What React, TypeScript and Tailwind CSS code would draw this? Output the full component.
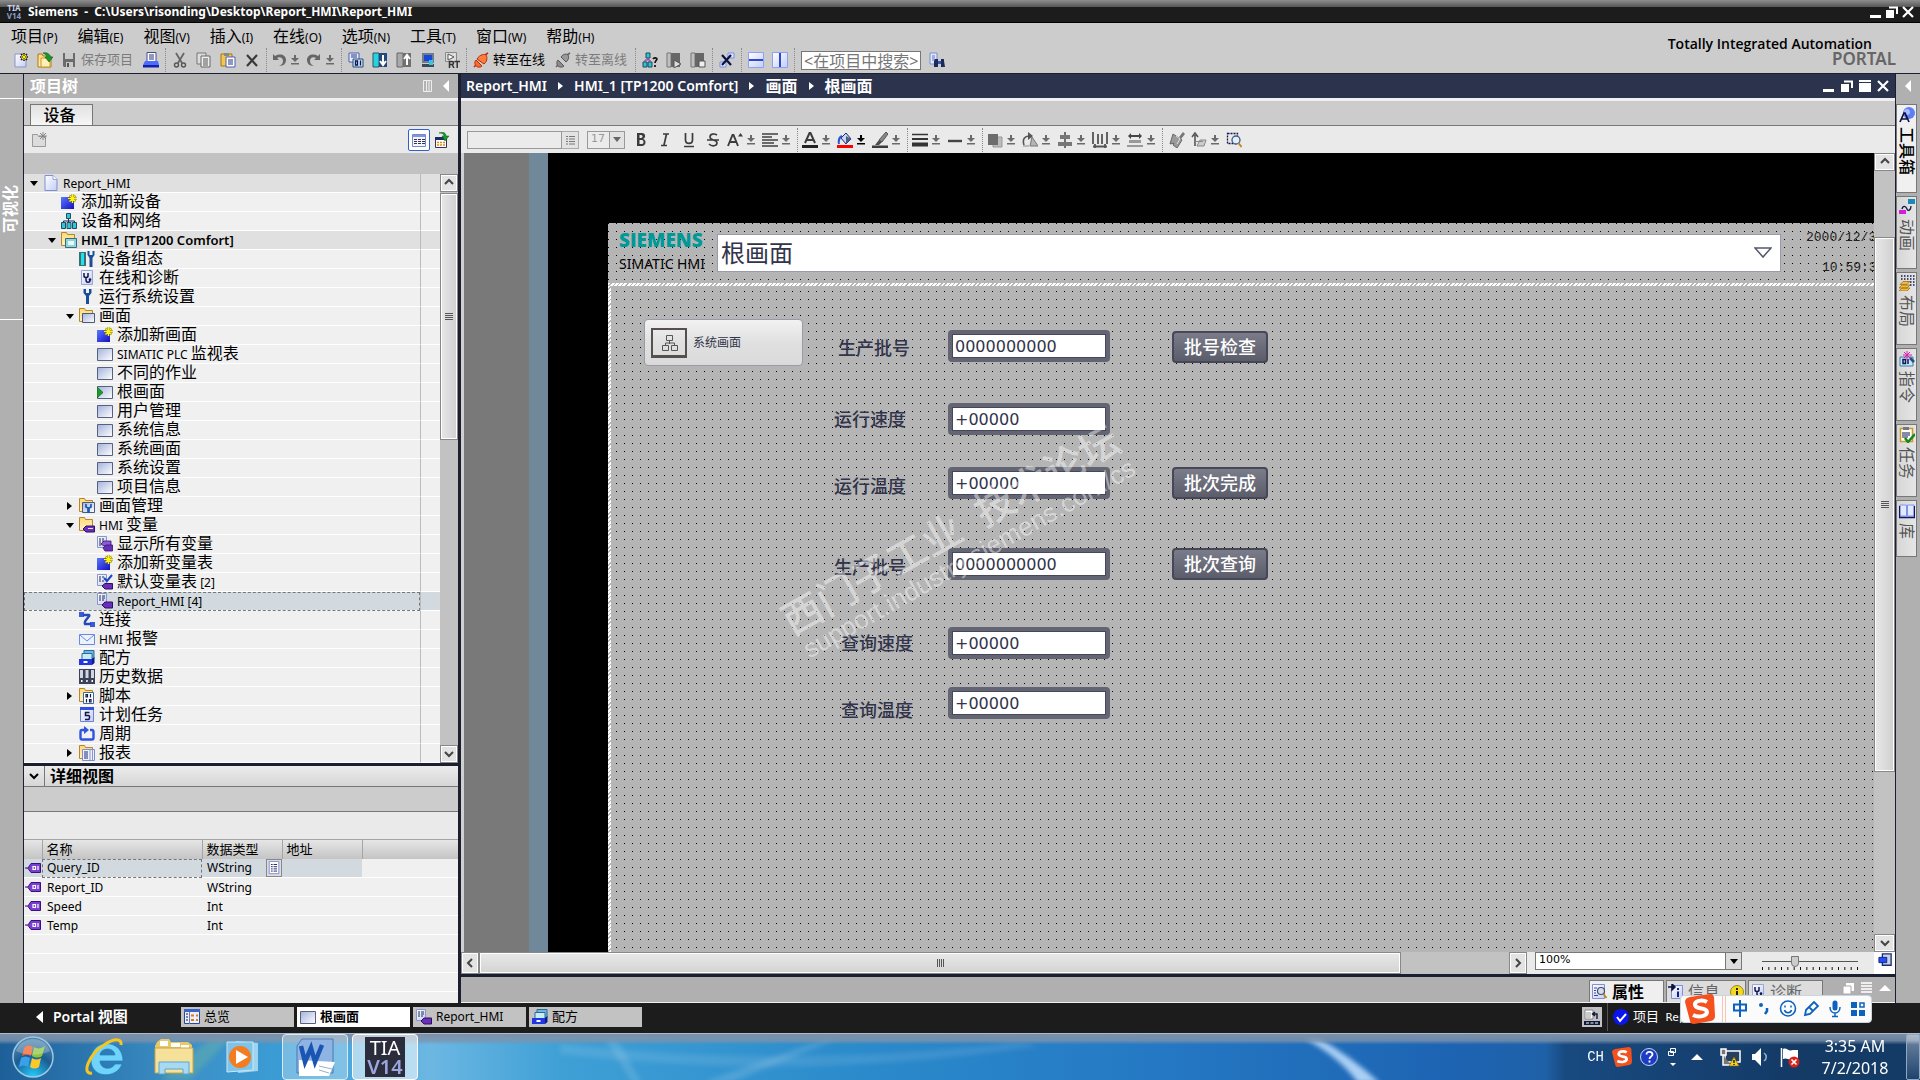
import { Fragment } from 'react'
import type { ReactNode } from 'react'
import clsx from 'clsx'

const icons: Record<string, ReactNode> = {
  newProject: (
    <>
      <path d="M2 2h8l3 3v10H2z" fill="url(#page)" stroke="#8794cf" />
      <path d="M11 1v8M7 5h8M8 2l6 6M14 2L8 8" stroke="#1c1c1c" strokeWidth="1.6" />
      <path d="M11 2v6M8 5h6M9 3l4 4M13 3L9 7" stroke="#ffee00" />
    </>
  ),
  open: (
    <>
      <path d="M1 2h4l1 2h8v11H1z" fill="url(#folder)" stroke="#b07a10" />
      <path d="M4 6h9v9H4z" fill="#fff0b8" stroke="#c99525" />
      <path d="M6 1c4-1 7 1 7 4h3l-4 5-4-5h2c0-2-2-3-4-4z" fill="#16982a" stroke="#0b5c16" strokeWidth=".6" />
    </>
  ),
  save: (
    <>
      <path d="M2 1h12v14H3l-1-1z" fill="#6b6b6b" />
      <path d="M4 1h8v6H4z" fill="#c9c9c9" />
      <path d="M5 10h7v5H5z" fill="#c9c9c9" />
      <path d="M6 11h2v4H6z" fill="#555" />
    </>
  ),
  print: (
    <>
      <path d="M4 .5h9v9H4z" fill="#fff" stroke="#444b88" />
      <path d="M6 3h5M6 5h5M6 7h5" stroke="#23307a" />
      <path d="M2 9h13l1 4H0z" fill="#4d6cff" />
      <path d="M0 13h16v2.500H0z" fill="#1220a8" />
    </>
  ),
  cut: (
    <>
      <path d="M4 1l6 10M12 1L6 11" stroke="#666" strokeWidth="1.8" fill="none" />
      <circle cx="4.5" cy="13" r="2" fill="none" stroke="#555" strokeWidth="1.4" />
      <circle cx="11.5" cy="13" r="2" fill="none" stroke="#555" strokeWidth="1.4" />
    </>
  ),
  copy: (
    <>
      <path d="M1 1h9v11H1z" fill="#ddd" stroke="#777" />
      <path d="M5 4h9v11H5z" fill="#eee" stroke="#666" />
      <path d="M7 7h5M7 9h5M7 11h5M7 13h5" stroke="#555" />
    </>
  ),
  paste: (
    <>
      <path d="M1 2h11v12H1z" fill="#f3c64d" stroke="#a3761a" />
      <path d="M4 1h5v3H4z" fill="#888" />
      <path d="M6 5h9v10H6z" fill="#fff" stroke="#4d5fb8" />
      <path d="M8 8h5M8 10h5M8 12h5" stroke="#23307a" />
    </>
  ),
  cross: <path d="M3 3l10 11M13 3L3 14" stroke="#3a3a3a" strokeWidth="2.2" />,
  undo: <path d="M2 2v6h6L6 6c3-2 6 0 6 3s-2 4-4 5c5 0 7-3 7-6 0-5-6-7-11-4z" fill="#666" />,
  redo: <path d="M14 2v6H8l2-2C7 4 4 6 4 9s2 4 4 5c-5 0-7-3-7-6 0-5 6-7 11-4z" fill="#666" />,
  compile: (
    <>
      <path d="M1 1h10v9H1z" fill="#e8edff" stroke="#4a5fae" />
      <path d="M3 3h6M3 5h6" stroke="#28377a" />
      <path d="M5 7h10v8H5z" fill="#cfe2f7" stroke="#1d4d80" />
      <path d="M7.500 9h2v4h-2zM12.500 8.500v5" fill="none" stroke="#10164e" strokeWidth="1.3" />
    </>
  ),
  download: (
    <>
      <path d="M1 1h6v14H1z" fill="#25d4e4" stroke="#33555a" />
      <path d="M7 1h8v14H7z" fill="#26467e" />
      <path d="M11 3v9M8 9l3 4 3-4" stroke="#fff" strokeWidth="2" fill="none" />
    </>
  ),
  upload: (
    <>
      <path d="M1 1h6v14H1z" fill="#aaa" stroke="#666" />
      <path d="M7 1h8v14H7z" fill="#707070" />
      <path d="M11 4v9M8 7l3-4 3 4" stroke="#fff" strokeWidth="2" fill="none" />
    </>
  ),
  simulate: (
    <>
      <path d="M2 1h12v10H2z" fill="#6f7d88" />
      <path d="M4 3h8v6H4z" fill="#1647d8" />
      <path d="M2 12h12v3H2z" fill="#3d4a55" />
      <path d="M9 8h4v5H9z" fill="#31c7e8" />
    </>
  ),
  runtime: (
    <>
      <path d="M1.500.5h11v9h-11z" fill="#ddd" stroke="#888" />
      <path d="M4 2l6 3-6 3z" fill="#fff" stroke="#555" />
      <path d="M5.500 16V9.500h2.500c2 0 2 3 0 3H6M8 12.500l2 3.500M10.500 9.500H16M13.200 9.500V16" stroke="#333" strokeWidth="1.500" />
    </>
  ),
  online: (
    <>
      <path d="M1 15l3-3M15 1l-3 2" stroke="#c03010" strokeWidth="1.6" />
      <path d="M3 8l6 6c-2 2-5 1-6 0s-2-4 0-6z" fill="#ff6a2a" stroke="#b32c08" />
      <path d="M4 7c3-5 8-5 9-4s2 6-2 9z" fill="#ff7d3c" stroke="#b32c08" />
    </>
  ),
  offline: (
    <>
      <path d="M1 15l3-3M15 1l-3 2" stroke="#666" strokeWidth="1.6" />
      <path d="M3 8l6 6c-2 2-5 1-6 0s-2-4 0-6z" fill="#8d8d8d" stroke="#555" />
      <path d="M6 5c3-4 6-3 7-2s1 5-2 7z" fill="#999" stroke="#555" />
    </>
  ),
  accessible: (
    <>
      <path d="M4 1h4v5H4zM1 10h4v5H1zM6 10h4v5H6z" fill="#29c5d5" stroke="#204a5a" />
      <path d="M6 6v2M3 10V8h5v2" stroke="#8a2fa8" fill="none" />
      <path d="M11 7c1-2 4-1 4 0s-2 2-2 4M13 13v2" stroke="#111" strokeWidth="1.7" fill="none" />
    </>
  ),
  startCpu: (
    <>
      <path d="M1 1h4v14H1z" fill="#c0c0c0" stroke="#777" />
      <path d="M5 1h9v14H5z" fill="#666" />
      <path d="M8 8l7 4-7 4z" fill="#ddd" stroke="#555" />
    </>
  ),
  stopCpu: (
    <>
      <path d="M1 1h4v14H1z" fill="#c0c0c0" stroke="#777" />
      <path d="M5 1h9v14H5z" fill="#666" />
      <path d="M9 9h6v6H9z" fill="#eee" stroke="#555" />
    </>
  ),
  crossRef: (
    <>
      <path d="M9 1h6v5H9zM1 10h6v5H1z" fill="#dfe6ff" stroke="#7c8ee8" />
      <path d="M3 3l9 10M12 3L3 13" stroke="#0a1440" strokeWidth="2.200" />
    </>
  ),
  splitH: (
    <>
      <path d="M.5.5h15v15H.5z" fill="url(#page)" stroke="#8ea0f0" />
      <path d="M1 8h14" stroke="#2c48cf" strokeWidth="2" />
    </>
  ),
  splitV: (
    <>
      <path d="M.5.5h15v15H.5z" fill="url(#page)" stroke="#8ea0f0" />
      <path d="M8 1v14" stroke="#2c48cf" strokeWidth="2" />
    </>
  ),
  findInProject: (
    <>
      <path d="M1 1h7v11H1z" fill="#dfe6ff" stroke="#7c8ec8" />
      <path d="M3 4h3M3 6h3M3 8h3" stroke="#6676b8" />
      <path d="M6 7h3v8H5V9zM12 7h3v2l1 6h-4z" fill="#1a2a5a" />
      <path d="M9 9h3v3H9z" fill="#3a56a8" />
    </>
  ),
  page: (
    <>
      <path d="M2 .5h8l4 4v11H2z" fill="url(#page)" stroke="#7e8fd0" />
      <path d="M10 .5v4h4" fill="#fff" stroke="#9aa8e0" />
    </>
  ),
  addNew: (
    <>
      <path d="M0 3h13v12H0z" fill="url(#blue)" />
      <path d="M11.500 0v9M7 4.500h9M8.500 1.500l6 6M14.500 1.500l-6 6" stroke="#77771a" strokeWidth="2" />
      <path d="M11.500 0v9M7 4.500h9M8.500 1.500l6 6M14.500 1.500l-6 6" stroke="#fff21a" strokeWidth="1.200" />
    </>
  ),
  network: (
    <>
      <path d="M7.500 5v4M2.500 10V8h11v2" stroke="#1a2a5a" fill="none" />
      <path d="M5.500.5h4v5h-4zM.5 9.500h4v6h-4zM6 9.500h4v6H6zM11.500 9.500h4v6h-4z" fill="#2cc9d4" stroke="#244a6a" />
    </>
  ),
  folderHmi: (
    <>
      <path d="M.5.5h5l1 2h7v11H.5z" fill="url(#folder)" stroke="#b5862a" />
      <path d="M4.500 6.500h11v9h-11z" fill="#8fd5dc" stroke="#3a6a78" />
      <path d="M7 9h6v4H7z" fill="#e6fbff" />
    </>
  ),
  folderScreens: (
    <>
      <path d="M.5.5h5l1 2h7v11H.5z" fill="url(#folder)" stroke="#b5862a" />
      <path d="M3.500 5.500h12v9h-12z" fill="url(#screen)" stroke="#4c5a78" />
    </>
  ),
  folderManage: (
    <>
      <path d="M.5.5h5l1 2h7v11H.5z" fill="url(#folder)" stroke="#b5862a" />
      <path d="M3.500 4.500h12v10h-12z" fill="url(#screen)" stroke="#4c5a78" />
      <path d="M7 6v3l2 1v4h1v-4l2-1V6" stroke="#1a57b0" strokeWidth="1.700" fill="none" />
    </>
  ),
  folderTags: (
    <>
      <path d="M.5.5h5l1 2h7v11H.5z" fill="url(#folder)" stroke="#b5862a" />
      <path d="M4 12l3-3h8.500v6H7z" fill="#6a2fb8" stroke="#2d0f66" />
      <path d="M9 11.500h5" stroke="#e6d8ff" />
    </>
  ),
  folderScript: (
    <>
      <path d="M.5.5h5l1 2h7v11H.5z" fill="url(#folder)" stroke="#b5862a" />
      <path d="M4.500 4.500h10v11h-10z" fill="#fff" stroke="#3a6a98" />
      <path d="M7 6.500h1.500v2.500H7zM11.500 6v3.500M7.500 11v3.500M10.500 11.500H12V14h-1.500z" fill="none" stroke="#111a50" strokeWidth="1.200" />
    </>
  ),
  folderReport: (
    <>
      <path d="M.5.5h5l1 2h7v11H.5z" fill="url(#folder)" stroke="#b5862a" />
      <path d="M3.500 4.500h12v11h-12z" fill="#eef1ff" stroke="#7e8fd0" />
      <path d="M5 7h4M5 9h4M5 11h4M5 13h4" stroke="#1a2a7a" />
      <path d="M11 5v10M13.500 5v10" stroke="#8a96c8" />
    </>
  ),
  deviceConfig: (
    <>
      <path d="M0 1h7v14H0z" fill="#3c6f72" />
      <path d="M2 2h3v12H2z" fill="#1de3ee" />
      <path d="M8.500 0v4l2 3v9h3V7l2-3V0h-2v4h-3V0z" fill="#1a4e9a" />
    </>
  ),
  diagnose: (
    <>
      <path d="M2.500.5h11v14h-11z" fill="url(#page)" stroke="#9aa6d8" />
      <path d="M5 3v3c0 2 4 2 4 0V3M7 8v2c0 3 4 3 4 0" stroke="#10164e" strokeWidth="1.500" fill="none" />
      <circle cx="11" cy="9.500" r="1.300" fill="#10164e" />
    </>
  ),
  wrench: <path d="M4.500 0v4L7 7v8h3V7l2.500-3V0H10v4H7V0z" fill="#1a4e9a" />,
  screen: <path d="M.5 2.500h15v12H.5z" fill="url(#screen)" stroke="#55617e" />,
  startScreen: (
    <>
      <path d="M.5 2.500h15v12H.5z" fill="url(#screen)" stroke="#55617e" />
      <path d="M0 3l6 5.500L0 14z" fill="#1e9a2c" stroke="#0b5c16" strokeWidth=".7" />
    </>
  ),
  tagsAll: (
    <>
      <path d="M.5.5h9v11h-9z" fill="url(#page)" stroke="#8a96c8" />
      <path d="M2 3h2M5 3h2M2 5h2M5 5h2M2 7h2M2 9h2" stroke="#1a2a5a" />
      <path d="M4 8l3-3h7v5H7z" fill="#8f5ad8" stroke="#34106e" strokeWidth=".8" />
      <path d="M6 12l3-3h6.500v6H8z" fill="#6a2fb8" stroke="#34106e" strokeWidth=".8" />
    </>
  ),
  tagTable: (
    <>
      <path d="M.5.5h9v11h-9z" fill="url(#page)" stroke="#8a96c8" />
      <path d="M2 3h2M5 3h3M2 5h2M5 5h3M2 7h2M5 7h2" stroke="#1a2a5a" />
      <path d="M5 12l3-3h7.500v6H8z" fill="#6a2fb8" stroke="#2d0f66" />
    </>
  ),
  tagDefault: (
    <>
      <path d="M.5.5h9v11h-9z" fill="url(#page)" stroke="#8a96c8" />
      <path d="M2 3h2M5 3h2M2 5h2M2 7h2M5 7h2" stroke="#1a2a5a" />
      <path d="M7 4l3 3 5-6" stroke="#1a44c4" strokeWidth="2" fill="none" />
      <path d="M5 12l3-2.500h7.500v5.500H8z" fill="#6a2fb8" stroke="#2d0f66" />
    </>
  ),
  connection: (
    <>
      <path d="M0 0h5v5H0zM11 10h5v5h-5z" fill="#3a5ad8" />
      <path d="M4 3h6c2 1-6 6-4 9h6" stroke="#2748b8" strokeWidth="2.400" fill="none" />
    </>
  ),
  mail: (
    <>
      <path d="M.5 3.500h15v10H.5z" fill="#eaf2ff" stroke="#6f88dc" />
      <path d="M1 4l7 6 7-6" fill="none" stroke="#6f88dc" />
    </>
  ),
  recipe: (
    <>
      <path d="M5 .5h10v8H5z" fill="#6fb8dc" stroke="#2a6a98" />
      <path d="M3 3.500h10v7H3z" fill="#c8ecf6" stroke="#2a6a98" />
      <path d="M13 9l2.500-2v6L13 15z" fill="#0f1a8a" />
      <path d="M0 9h13v6H0z" fill="#1f36e0" />
      <path d="M4.500 11h4v2h-4z" fill="#fff" />
    </>
  ),
  history: (
    <>
      <path d="M0 0h16v15H0z" fill="#3b4258" />
      <path d="M1 1h3v8H1zM6.500 1h3v8h-3zM12 1h3v8h-3z" fill="#cfd5e2" />
      <path d="M2 11h1.500v2H2zM7.200 11h1.500v2H7.200zM12.500 11H14v2h-1.500z" fill="#fff" />
    </>
  ),
  calendar: (
    <>
      <path d="M1.500.5h13v14h-13z" fill="url(#page)" stroke="#6f7fd8" />
      <path d="M1 0h14v3H1z" fill="#2f52e0" />
      <path d="M10.500 5.500h-4v3h3c1.500 0 1.500 4-.5 4H6" stroke="#10164e" strokeWidth="1.500" fill="none" />
    </>
  ),
  cycle: (
    <>
      <path d="M5 4H3q-1.500 0-1.500 2v5.500q0 2 1.500 2h10q1.500 0 1.500-2V6q0-2-1.500-2h-2" stroke="#2f52e0" strokeWidth="2.400" fill="none" />
      <path d="M5 0l5 4-5 4z" fill="#2f52e0" />
    </>
  ),
  tag: (
    <>
      <path d="M0 8h3l3-4.500h9.500v9H6L3 8.500" fill="#7a3fd0" stroke="#3a1080" />
      <path d="M8 6.500h2.500v3H8zM13 6v4" stroke="#fff" fill="none" strokeWidth="1.200" />
    </>
  ),
  list: (
    <>
      <path d="M2.500.5h11v14h-11z" fill="#fff" stroke="#6f82d8" />
      <path d="M4.500 4h2M7.500 4h4M4.500 6.500h2M7.500 6.500h4M4.500 9h2M7.500 9h4M4.500 11.500h2M7.500 11.500h4" stroke="#10164e" />
    </>
  ),
  detailsView: (
    <>
      <path d="M1.500 2.500h13v12h-13z" fill="#f4f6ff" stroke="#7787c8" />
      <path d="M2 4h12" stroke="#7f94e8" strokeWidth="2" />
      <path d="M3 7.500h3M7 7.500h3M11 7.500h3M3 9.500h3M7 9.500h3M11 9.500h3M3 11.500h3M7 11.500h3M11 11.500h3" stroke="#334" />
    </>
  ),
  goTo: (
    <>
      <path d="M1.500 5.500h11v10h-11z" fill="#fff" stroke="#335" />
      <path d="M1 5h11v3H1z" fill="#1b2c6a" />
      <path d="M3 10.500h2M6 10.500h2M9 10.500h2M3 13h2M6 13h2M9 13h2" stroke="#e08a10" strokeWidth="1.600" />
      <path d="M5 1c4-2 7 0 7 3h3l-4 5-3-5h2c0-2-2-3-5-3z" fill="#16982a" stroke="#0b5c16" strokeWidth=".5" />
    </>
  ),
  newFolderOff: (
    <>
      <path d="M1.500 2.500h5l1 2h7v10h-13z" fill="#dcdcdc" stroke="#999" />
      <path d="M12 0v8M8 4h8M9 1l6 6M15 1L9 7" stroke="#888" />
    </>
  ),
  bold: <path d="M4 1h5c4 0 4 5 1 6 4 1 3 7-1 7H4zm2.500 2v3H8c2 0 2-3 0-3zm0 5v4H9c2 0 2-4 0-4z" fill="#3c3c3c" fillRule="evenodd" />,
  italic: <path d="M6 2h6M4 13.500h6M9.500 2l-2.500 11" stroke="#3c3c3c" strokeWidth="1.700" />,
  underline: <path d="M4.500 1v7c0 4.500 7 4.500 7 0V1M3 14.500h10" fill="none" stroke="#3c3c3c" strokeWidth="1.700" />,
  strike: <path d="M12 3c-3-2-7-1-7 2 0 4 7 2 7 6 0 3-5 4-8 1M2 8h12" fill="none" stroke="#3c3c3c" strokeWidth="1.600" />,
  fontSize: (
    <>
      <path d="M1 14L5.500 3h1L11 14M3 10h6" fill="none" stroke="#3c3c3c" strokeWidth="1.900" />
      <path d="M11 4.500L13.500 1 16 4.500z" fill="#3c3c3c" />
    </>
  ),
  align: <path d="M0 2h16M0 5h10M0 8h16M0 11h12M0 14h16" stroke="#6a6a6a" strokeWidth="1.800" />,
  fontColor: (
    <>
      <path d="M3 11L7.500 1h1L13 11M5 8h6" fill="none" stroke="#3c3c3c" strokeWidth="2" />
      <path d="M0 13h16v3H0z" fill="#222" />
    </>
  ),
  fillColor: (
    <>
      <path d="M4 6l5-5 5 6-5 5z" fill="#c8d6f4" stroke="#1c2c5a" />
      <path d="M9 4l5 3-5 5z" fill="#4a5f90" />
      <path d="M5 4c-2 1-4 3-3 8" stroke="#2b55d8" strokeWidth="2" fill="none" />
      <path d="M0 13h16v3H0z" fill="#f00" />
    </>
  ),
  lineColor: (
    <>
      <path d="M14 0l2 2-6 8-3-2z" fill="#888" stroke="#555" />
      <path d="M7 8l3 2-3 3H3z" fill="#4c4c4c" />
      <path d="M0 13.500h16V16H0z" fill="#3c3c3c" />
    </>
  ),
  lineWidth: (
    <>
      <path d="M0 2.500h16" stroke="#333" strokeWidth="1.500" />
      <path d="M0 7h16" stroke="#333" strokeWidth="2" />
      <path d="M0 12.500h16" stroke="#333" strokeWidth="4" />
    </>
  ),
  lineStyle: <path d="M1 9h14" stroke="#444" strokeWidth="2.400" />,
  order: (
    <>
      <path d="M6 5h9v10H6z" fill="#bbb" stroke="#999" />
      <path d="M1 2h10v11H1z" fill="#6c6c6c" />
    </>
  ),
  rotate: (
    <>
      <path d="M8 14l2-9 6 9z" fill="#b5b5b5" stroke="#777" />
      <path d="M2 13C0 7 3 4 7 4" fill="none" stroke="#555" strokeWidth="1.600" />
      <path d="M6 0l5 4-5 4z" fill="#555" />
      <path d="M1 14h6" stroke="#888" />
    </>
  ),
  alignObj: (
    <>
      <path d="M8 0v16" stroke="#444" strokeWidth="1.500" />
      <path d="M3 3h10v4H3zM1 10h14v4H1z" fill="#777" />
    </>
  ),
  distribute: <path d="M1 0v12M6 2v10M10 2v10M15 0v12M1 14.500h14M3 12v4M13 12v4" stroke="#555" strokeWidth="1.800" />,
  sameSize: (
    <>
      <path d="M1 4l3-3v2h8V1l3 3-3 3V5H4v2z" fill="#444" />
      <path d="M2 8h12v3H2zM0 13h16v2H0z" fill="#999" />
    </>
  ),
  formatBrush: (
    <>
      <path d="M10 5l4-5 2 2-4 5z" fill="#777" />
      <path d="M4 2l9 6-5 8-4-3 1-2-4 1z" fill="#9b9b9b" stroke="#666" />
      <path d="M7 4l4 3-3 5" stroke="#ddd" />
    </>
  ),
  tabOrder: (
    <>
      <path d="M4 14V3M1 5l3-4 3 4" stroke="#555" strokeWidth="1.600" fill="none" />
      <path d="M4 9.500h8M9 8h6l-2 6H6z" fill="#ccc" stroke="#888" />
    </>
  ),
  zoomSel: (
    <>
      <path d="M1.500 1.500h10v10h-10z" fill="none" stroke="#10164e" strokeWidth="1.300" strokeDasharray="2 1" />
      <circle cx="10" cy="8" r="4" fill="#dcf0ff" stroke="#4a5a78" strokeWidth="1.300" />
      <path d="M12.500 11l3 4" stroke="#c08a20" strokeWidth="2" />
    </>
  ),
  toolbox: (
    <>
      <circle cx="10" cy="6" r="6" fill="#5f7df4" />
      <circle cx="8" cy="5" r="3" fill="#a9bcff" />
      <path d="M1 15l4-9h1l4 9M3 12h5" stroke="#0a0f40" strokeWidth="1.700" fill="none" />
    </>
  ),
  animation: (
    <>
      <path d="M9 0h7v5H9z" fill="#1b88b8" />
      <path d="M0 11h7v4H0z" fill="#d01fd8" />
      <path d="M3 10c1-4 4-3 5 0s4 1 4-3" fill="none" stroke="#10164e" strokeWidth="1.300" />
    </>
  ),
  layout: (
    <>
      <path d="M2 1h14M2 4h14M8 7h8M11 10h5" stroke="#10164e" strokeWidth="1.300" strokeDasharray="1.500 1.500" />
      <path d="M0 13l3-3h8l-3 3zM1 9.500l3-3h7l-3 3zM0 16l3-3h8l-3 3z" fill="#f0b93a" stroke="#9a6a10" strokeWidth=".7" />
    </>
  ),
  instructions: (
    <>
      <path d="M1 6h13v9H1z" fill="#c7e6f8" stroke="#3a7fb0" />
      <path d="M4 8.500h2.500v4H4zM9 8v5" fill="none" stroke="#10164e" strokeWidth="1.500" />
      <path d="M8 0v9M4 4h9M5 1l6 6M11 1L5 7" stroke="#d81fb0" />
      <path d="M11 7l4 4" stroke="#2a4a80" strokeWidth="2.500" />
    </>
  ),
  tasks: (
    <>
      <path d="M1.500 1.500h12v13h-12z" fill="#fff" stroke="#c99a2a" strokeWidth="1.500" />
      <path d="M4 0h6v3H4z" fill="#777" />
      <path d="M3 6h8M3 8h8M3 10h6" stroke="#10164e" />
      <path d="M6 11l3 4 7-8" stroke="#16881f" strokeWidth="2.500" fill="none" />
    </>
  ),
  library: (
    <>
      <path d="M1 2h6.500v11H1zM8.500 2H15v11H8.500z" fill="#e3e9ff" stroke="#7f95f0" />
      <path d="M.5 3v11.500h15V3" fill="none" stroke="#0c1766" strokeWidth="1.300" />
    </>
  ),
  overview: (
    <>
      <path d="M.5.5h15v14H.5z" fill="#e9efff" stroke="#2a4a90" />
      <path d="M0 0h16v3H0z" fill="#3a62c8" />
      <path d="M2 5h2M2 8h2M2 11h2" stroke="#10164e" />
      <path d="M7 6.500h3M12 6.500h2M7 11h3M12 11h2" stroke="#e07a10" strokeWidth="2" />
      <path d="M5.500 3v12" stroke="#6a7ab8" />
    </>
  ),
  properties: (
    <>
      <path d="M.5.5h12v14H.5z" fill="url(#page)" stroke="#7f8fd8" />
      <path d="M2 4h3M2 6.500h2M2 9h2M2 11.500h4" stroke="#334a9a" />
      <circle cx="9" cy="7" r="3.500" fill="#d8dce8" stroke="#444c68" strokeWidth="1.200" />
      <path d="M11.500 10l3 4" stroke="#c08a20" strokeWidth="2" />
    </>
  ),
  info: (
    <>
      <path d="M3.500 1.500h11v13h-11z" fill="url(#page)" stroke="#7f8fd8" />
      <path d="M0 3h5M4 0l3 3-3 3z" stroke="#0c1444" strokeWidth="1.500" fill="#0c1444" />
      <path d="M10 4v2M10 7.500V13" stroke="#10208a" strokeWidth="2" />
    </>
  ),
  popOut: (
    <>
      <path d="M5 1h10v13H5z" fill="#c6d0e6" stroke="#1a2c70" strokeWidth="1.500" />
      <path d="M1 5h9v6H1z" fill="#2450f0" stroke="#0c1d80" />
    </>
  ),
  status: (
    <>
      <path d="M1 1h8v9H1z" fill="#fff" stroke="#888" />
      <path d="M2 4h5M2 6h5M2 8h5" stroke="#999" />
      <path d="M0 12h16v4H0z" fill="#101a3c" />
      <path d="M2 14h3M6.500 14h3M11 14h3" stroke="#fff" />
      <path d="M9 5h4v5M11 3L8.500 5 11 7" stroke="#101a3c" strokeWidth="1.400" fill="none" />
    </>
  ),
}

function Icon({ name, className = 'size-4' }: { name: string; className?: string }) {
  return (
    <svg viewBox="0 0 16 16" fill="none" className={clsx('shrink-0', className)} aria-hidden="true">
      {icons[name]}
    </svg>
  )
}

// Han characters are set larger than the latin text beside them
function Mixed({ text, han = 'text-base' }: { text: string; han?: string }) {
  return (
    <>
      {text.split(/([\u4e00-\u9fff]+)/).map((part, i) =>
        i % 2 ? (
          <span key={i} className={han}>
            {part}
          </span>
        ) : (
          part
        )
      )}
    </>
  )
}

function IconButton({ name, className = 'w-6' }: { name: string; className?: string }) {
  return (
    <button type="button" aria-label={name} className={clsx('flex h-5 shrink-0 items-center justify-center', className)}>
      <Icon name={name} />
    </button>
  )
}

function DropMark({ dark = false }: { dark?: boolean }) {
  return (
    <svg viewBox="0 0 8 10" className={clsx('h-[10px] w-2', dark ? 'fill-black' : 'fill-[#6a6a6a]')} aria-hidden="true">
      <path d="M3 0h2v3h3L4 7 0 3h3zM0 8h8v1.500H0z" />
    </svg>
  )
}

function SplitButton({ name, dark }: { name: string; dark?: boolean }) {
  return (
    <div className="flex w-[35px] shrink-0 items-center gap-[2px]">
      <IconButton name={name} className="w-5" />
      <button type="button" aria-label={`${name} menu`}>
        <DropMark dark={dark} />
      </button>
    </div>
  )
}

function Separator() {
  return <div className="mx-[2px] h-6 w-px shrink-0 border-l border-dotted border-[#8a8a8a]" />
}

function TextButton({ children, disabled }: { children: ReactNode; disabled?: boolean }) {
  return (
    <button type="button" disabled={disabled} className={clsx('w-[58px] shrink-0 text-left text-[13px]', disabled ? 'text-[#7c7c7c]' : 'text-black')}>
      {children}
    </button>
  )
}

function WindowGlyph({ kind }: { kind: 'min' | 'restore' | 'max' | 'close' }) {
  return (
    <svg viewBox="0 0 12 12" className="size-3" fill="none" aria-hidden="true">
      {kind === 'min' && <path d="M0 9h11v3H0z" fill="#fff" />}
      {kind === 'restore' && (
        <>
          <path d="M0 4h8v8H0z" fill="#fff" />
          <path d="M3 1.500h8V8" stroke="#fff" strokeWidth="2" />
        </>
      )}
      {kind === 'max' && <path d="M0 0h12v2H0zM0 3h12v9H0z" fill="#fff" />}
      {kind === 'close' && <path d="M1 1l10 10M11 1L1 11" stroke="#fff" strokeWidth="2.200" />}
    </svg>
  )
}

const menus = ['项目(P)', '编辑(E)', '视图(V)', '插入(I)', '在线(O)', '选项(N)', '工具(T)', '窗口(W)', '帮助(H)']

function TitleBar() {
  return (
    <header className="flex h-[23px] shrink-0 items-center border-b border-black bg-[linear-gradient(#8e8e8e_0px,#555_7px,#1c1c1c_7px)] pl-[6px] pr-[6px] pt-px">
      <div className="w-4 text-center text-[8px] font-bold leading-[8px] text-[#c8d2ea]">
        <div>TIA</div>
        <div className="text-[#8a9bc8]">V14</div>
      </div>
      <h1 className="pl-[6px] text-xs font-bold text-white">Siemens&nbsp; -&nbsp; C:\Users\risonding\Desktop\Report_HMI\Report_HMI</h1>
      <div className="ml-auto flex gap-1">
        {(['min', 'restore', 'close'] as const).map((kind) => (
          <button key={kind} type="button" aria-label={kind}>
            <WindowGlyph kind={kind} />
          </button>
        ))}
      </div>
    </header>
  )
}

function MenuArea() {
  return (
    <div className="flex h-[51px] shrink-0 justify-between border-b border-[#1a2030] bg-[#ccc]">
      <div className="flex flex-col">
        <nav className="flex h-[26px] shrink-0 items-center gap-5 pl-[11px]">
          {menus.map((m) => (
            <button key={m} type="button" className="text-xs leading-none">
              <Mixed text={m} />
            </button>
          ))}
        </nav>
        <div className="flex h-[22px] shrink-0 items-center pl-[9px]">
          <IconButton name="newProject" />
          <IconButton name="open" />
          <IconButton name="save" />
          <TextButton disabled>保存项目</TextButton>
          <IconButton name="print" />
          <Separator />
          <IconButton name="cut" />
          <IconButton name="copy" />
          <IconButton name="paste" />
          <IconButton name="cross" />
          <Separator />
          <SplitButton name="undo" />
          <SplitButton name="redo" />
          <Separator />
          <IconButton name="compile" />
          <IconButton name="download" />
          <IconButton name="upload" />
          <IconButton name="simulate" />
          <IconButton name="runtime" />
          <Separator />
          <IconButton name="online" />
          <TextButton>转至在线</TextButton>
          <IconButton name="offline" />
          <TextButton disabled>转至离线</TextButton>
          <Separator />
          <IconButton name="accessible" />
          <IconButton name="startCpu" />
          <IconButton name="stopCpu" />
          <Separator />
          <IconButton name="crossRef" />
          <Separator />
          <IconButton name="splitH" />
          <IconButton name="splitV" />
          <Separator />
          <input
            aria-label="在项目中搜索"
            defaultValue="<在项目中搜索>"
            className="mx-1 h-[19px] w-[120px] border border-[#777] bg-white px-[2px] text-base leading-none text-[#777]"
          />
          <IconButton name="findInProject" />
        </div>
      </div>
      <div className="flex flex-col items-end pr-6 pt-3">
        <div className="pr-6 font-['Open_Sans'] text-sm font-semibold leading-[18px]">Totally Integrated Automation</div>
        <div className="text-[17px] font-semibold leading-3 text-[#666]">PORTAL</div>
      </div>
    </div>
  )
}

type Node = { level: number; icon: string; label: string; open?: boolean; closed?: boolean; strong?: boolean; shaded?: boolean; selected?: boolean }

const tree: Node[] = [
  { level: 0, icon: 'page', label: 'Report_HMI', open: true, shaded: true },
  { level: 1, icon: 'addNew', label: '添加新设备' },
  { level: 1, icon: 'network', label: '设备和网络' },
  { level: 1, icon: 'folderHmi', label: 'HMI_1 [TP1200 Comfort]', open: true, strong: true, shaded: true },
  { level: 2, icon: 'deviceConfig', label: '设备组态' },
  { level: 2, icon: 'diagnose', label: '在线和诊断' },
  { level: 2, icon: 'wrench', label: '运行系统设置' },
  { level: 2, icon: 'folderScreens', label: '画面', open: true },
  { level: 3, icon: 'addNew', label: '添加新画面' },
  { level: 3, icon: 'screen', label: 'SIMATIC PLC 监视表' },
  { level: 3, icon: 'screen', label: '不同的作业' },
  { level: 3, icon: 'startScreen', label: '根画面' },
  { level: 3, icon: 'screen', label: '用户管理' },
  { level: 3, icon: 'screen', label: '系统信息' },
  { level: 3, icon: 'screen', label: '系统画面' },
  { level: 3, icon: 'screen', label: '系统设置' },
  { level: 3, icon: 'screen', label: '项目信息' },
  { level: 2, icon: 'folderManage', label: '画面管理', closed: true },
  { level: 2, icon: 'folderTags', label: 'HMI 变量', open: true },
  { level: 3, icon: 'tagsAll', label: '显示所有变量' },
  { level: 3, icon: 'addNew', label: '添加新变量表' },
  { level: 3, icon: 'tagDefault', label: '默认变量表 [2]' },
  { level: 3, icon: 'tagTable', label: 'Report_HMI [4]', selected: true },
  { level: 2, icon: 'connection', label: '连接' },
  { level: 2, icon: 'mail', label: 'HMI 报警' },
  { level: 2, icon: 'recipe', label: '配方' },
  { level: 2, icon: 'history', label: '历史数据' },
  { level: 2, icon: 'folderScript', label: '脚本', closed: true },
  { level: 2, icon: 'calendar', label: '计划任务' },
  { level: 2, icon: 'cycle', label: '周期' },
  { level: 2, icon: 'folderReport', label: '报表', closed: true },
]

const indents = ['pl-0', 'pl-[18px]', 'pl-[36px]', 'pl-[54px]']

function TreeRow({ node }: { node: Node }) {
  const bg = node.selected ? 'bg-[#d2d9df]' : node.shaded ? 'bg-[#e0e0e0]' : 'bg-[#f0f0f0]'
  return (
    <div role="treeitem" aria-selected={!!node.selected} className="flex h-[19px]">
      <div
        className={clsx(
          'flex flex-1 items-center border-b border-white',
          bg,
          indents[node.level],
          node.selected && 'outline-1 -outline-offset-1 outline-dashed outline-[#777]'
        )}
      >
        <span className="flex w-[19px] justify-center">
          {node.open && (
            <svg viewBox="0 0 8 5" className="h-[5px] w-2">
              <path d="M0 0h8L4 5z" />
            </svg>
          )}
          {node.closed && (
            <svg viewBox="0 0 5 8" className="h-2 w-[5px]">
              <path d="M0 0v8l5-4z" />
            </svg>
          )}
        </span>
        <Icon name={node.icon} />
        <span className={clsx('whitespace-nowrap pl-1 leading-[19px]', node.strong ? 'text-[13px] font-semibold' : 'text-xs')}>
          <Mixed text={node.label} han="text-base leading-[19px]" />
        </span>
      </div>
      <div className={clsx('w-5 border-b border-l border-b-white border-l-[#bbb]', bg)} />
    </div>
  )
}

function ScrollButton({ dir, className }: { dir: 'up' | 'down' | 'left' | 'right'; className?: string }) {
  const d = { up: 'M1 6l4-4 4 4', down: 'M1 3l4 4 4-4', left: 'M7 1L3 5l4 4', right: 'M3 1l4 4-4 4' }[dir]
  const size = dir === 'up' || dir === 'down' ? 'h-[18px] w-full' : 'h-full w-[18px]'
  return (
    <button
      type="button"
      aria-label={dir}
      className={clsx('flex shrink-0 items-center justify-center border border-[#888] bg-[#e3e3e3] shadow-[inset_0_0_0_1px_#fff]', size, className)}
    >
      <svg viewBox="0 0 10 10" className="size-[10px]" fill="none" stroke="#444" strokeWidth="2">
        <path d={d} />
      </svg>
    </button>
  )
}

const tags = [
  ['Query_ID', 'WString'],
  ['Report_ID', 'WString'],
  ['Speed', 'Int'],
  ['Temp', 'Int'],
]

function DetailTable() {
  return (
    <table className="w-full table-fixed border-collapse text-xs">
      <colgroup>
        <col className="w-[18px]" />
        <col className="w-[160px]" />
        <col className="w-20" />
        <col className="w-20" />
        <col />
      </colgroup>
      <thead>
        <tr className="h-[19px] bg-linear-to-b from-[#e6e6e6] to-[#c4c4c4] text-left text-[13px]">
          {['', '名称', '数据类型', '地址', ''].map((h, i) => (
            <th key={i} className="border-t border-r border-[#a5a5a5] p-0 pl-1 font-normal leading-[17px] last:border-r-0">
              {h}
            </th>
          ))}
        </tr>
      </thead>
      <tbody>
        {tags.map(([name, type], i) => (
          <tr key={name} className="h-[19px] border-b border-white bg-[#f0f0f0]">
            <td className={clsx('p-0', i === 0 && 'bg-[#d2d9df]')}>
              <Icon name="tag" className="ml-px size-4" />
            </td>
            <td className={clsx('p-0 pl-[5px] leading-[17px]', i === 0 && 'bg-[#d2d9df] outline-1 -outline-offset-1 outline-dashed outline-[#777]')}>{name}</td>
            <td className={clsx('p-0 pl-[5px] leading-[17px]', i === 0 && 'bg-[#d2d9df]')}>
              <div className="flex items-center justify-between">
                {type}
                {i === 0 && (
                  <button type="button" aria-label="选择数据类型" className="flex h-[18px] w-4 items-center justify-center border border-[#888] bg-[#ddd]">
                    <Icon name="list" className="size-[14px]" />
                  </button>
                )}
              </div>
            </td>
            <td className={clsx('p-0', i === 0 && 'bg-[#d2d9df]')} />
            <td className="p-0" />
          </tr>
        ))}
        {[0, 1, 2, 3].map((i) => (
          <tr key={i} className="h-[19px] border-b border-white bg-[#f0f0f0]">
            <td colSpan={5} className="p-0" />
          </tr>
        ))}
      </tbody>
    </table>
  )
}

function ProjectPanel() {
  return (
    <aside className="flex w-[434px] shrink-0 flex-col overflow-hidden bg-[#eaeaea]">
      <div className="flex h-6 shrink-0 items-center bg-[#b2b2b2] px-[6px] text-white">
        <h2 className="flex-1 text-base font-bold leading-none">项目树</h2>
        <svg viewBox="0 0 30 12" className="h-3 w-[30px]" fill="none">
          <path d="M1.500.5h8v11h-8zM4.500 1v10M7 1v10" stroke="#eee" />
          <path d="M27 0v12l-6-6z" fill="#fff" />
        </svg>
      </div>
      <div className="flex h-[28px] shrink-0 items-end border-t-[3px] border-b border-t-[#f0f0f0] border-b-[#777] bg-[#ccc] pl-[6px]">
        <button type="button" className="h-[21px] w-[63px] border border-b-0 border-[#777] bg-linear-to-b from-[#e2e2e2] to-[#f6f6f6] pr-1 text-base font-medium leading-[18px]">
          设备
        </button>
      </div>
      <div className="flex h-[27px] shrink-0 items-center bg-[#eaeaea] pl-[7px] pr-1">
        <Icon name="newFolderOff" />
        <button type="button" aria-label="详细信息" className="ml-auto flex size-[22px] items-center justify-center rounded-xs border border-[#2f5fd0] bg-white">
          <Icon name="detailsView" />
        </button>
        <IconButton name="goTo" />
      </div>
      <div className="h-[21px] shrink-0 bg-[#c2c2c2]" />
      <div className="flex shrink-0">
        <div role="tree" className="flex-1">
          {tree.map((n, i) => (
            <TreeRow key={i} node={n} />
          ))}
        </div>
        <div className="flex w-[18px] flex-col bg-[#c2c2c2]">
          <ScrollButton dir="up" />
          <div className="mt-px flex h-[247px] items-center justify-center border border-[#888] bg-linear-to-r from-[#e8e8e8] to-[#d0d0d0] shadow-[inset_0_0_0_1px_#fff]">
            <div className="h-[7px] w-2 bg-[repeating-linear-gradient(#555_0_1px,#ddd_1px_2px)]" />
          </div>
          <ScrollButton dir="down" className="mt-auto" />
        </div>
      </div>
      <div className="flex h-6 shrink-0 items-center border-t-[3px] border-b border-t-[#1a2030] border-b-[#777] bg-linear-to-b from-[#ececec] to-[#d6d6d6]">
        <button type="button" aria-label="折叠" className="flex h-full w-[21px] items-center justify-center border-r border-[#777]">
          <svg viewBox="0 0 10 7" className="h-[7px] w-[10px]" fill="none" stroke="#000" strokeWidth="2">
            <path d="M1 1l4 4 4-4" />
          </svg>
        </button>
        <h2 className="pl-[5px] text-base font-bold leading-none">详细视图</h2>
      </div>
      <div className="h-[25px] shrink-0 border-b border-[#777] bg-[#ccc]" />
      <div className="h-[27px] shrink-0 bg-[#eaeaea]" />
      <DetailTable />
    </aside>
  )
}

function Crumbs() {
  return (
    <nav className="flex h-6 shrink-0 items-center bg-[#2c344d] pl-[5px] pr-[6px] text-sm font-semibold text-white">
      {['Report_HMI', 'HMI_1 [TP1200 Comfort]', '画面', '根画面'].map((c, i) => (
        <Fragment key={c}>
          {i > 0 && (
            <svg viewBox="0 0 5 8" className="mx-[11px] h-2 w-[5px]" fill="#fff">
              <path d="M0 0v8l5-4z" />
            </svg>
          )}
          <a href="#" className="whitespace-nowrap leading-none">
            <Mixed text={c} han="text-base leading-none font-bold" />
          </a>
        </Fragment>
      ))}
      <div className="ml-auto flex gap-[6px]">
        {(['min', 'restore', 'max', 'close'] as const).map((kind) => (
          <button key={kind} type="button" aria-label={kind}>
            <WindowGlyph kind={kind} />
          </button>
        ))}
      </div>
    </nav>
  )
}

function FormatBar() {
  return (
    <div className="flex h-[27px] shrink-0 items-center bg-[#eaeaea] pl-[6px]">
      <input aria-label="字体" readOnly className="h-[18px] w-[95px] border border-[#999] bg-[#ebebeb]" />
      <button type="button" aria-label="选择字体" className="flex h-[18px] w-[17px] items-center justify-center border border-l-0 border-[#aaa] bg-[#e3e3e3]">
        <svg viewBox="0 0 9 10" className="h-[10px] w-[9px]" stroke="#777">
          <path d="M0 1.500h2M3 1.500h6M0 4h2M3 4h6M0 6.500h2M3 6.500h6M0 9h2M3 9h6" />
        </svg>
      </button>
      <div className="relative ml-2 mr-1 h-[18px] w-[38px]">
        <select aria-label="字号" className="block h-full w-full appearance-none border border-[#999] bg-[#ebebeb] pb-[3px] pl-[3px] font-['DejaVu_Sans'] text-[11px] leading-none text-[#999]">
          <option>17</option>
        </select>
        <span className="pointer-events-none absolute inset-y-px right-px flex w-[15px] items-center justify-center border-l border-[#999] bg-[#e3e3e3]">
          <svg viewBox="0 0 8 5" className="h-[5px] w-2" fill="#666">
            <path d="M0 0h8L4 5z" />
          </svg>
        </span>
      </div>
      <IconButton name="bold" />
      <IconButton name="italic" />
      <IconButton name="underline" />
      <IconButton name="strike" />
      <SplitButton name="fontSize" />
      <SplitButton name="align" />
      <Separator />
      <SplitButton name="fontColor" />
      <SplitButton name="fillColor" dark />
      <SplitButton name="lineColor" />
      <Separator />
      <SplitButton name="lineWidth" />
      <SplitButton name="lineStyle" />
      <Separator />
      <SplitButton name="order" />
      <SplitButton name="rotate" />
      <SplitButton name="alignObj" />
      <SplitButton name="distribute" />
      <SplitButton name="sameSize" />
      <Separator />
      <IconButton name="formatBrush" />
      <SplitButton name="tabOrder" />
      <IconButton name="zoomSel" className="w-5" />
    </div>
  )
}

const fields = [
  { id: 'batch', label: '生产批号', value: '0000000000', at: 'left-[340px] top-[44px]', labelAt: 'left-[230px] top-[50px]' },
  { id: 'speed', label: '运行速度', value: '+00000', at: 'left-[340px] top-[117px]', labelAt: 'left-[226px] top-[121px]' },
  { id: 'temp', label: '运行温度', value: '+00000', at: 'left-[340px] top-[181px]', labelAt: 'left-[226px] top-[188px]' },
  { id: 'queryBatch', label: '生产批号', value: '0000000000', at: 'left-[340px] top-[262px]', labelAt: 'left-[226px] top-[269px]' },
  { id: 'querySpeed', label: '查询速度', value: '+00000', at: 'left-[340px] top-[341px]', labelAt: 'left-[233px] top-[345px]' },
  { id: 'queryTemp', label: '查询温度', value: '+00000', at: 'left-[340px] top-[401px]', labelAt: 'left-[233px] top-[412px]' },
]

const actions = [
  { label: '批号检查', at: 'left-[564px] top-[45px]' },
  { label: '批次完成', at: 'left-[564px] top-[181px]' },
  { label: '批次查询', at: 'left-[564px] top-[262px]' },
]

// Snap grid of the screen editor, one dot every 8px
function DotGrid({ id, y }: { id: string; y: number }) {
  return (
    <svg className="absolute inset-0 size-full" shapeRendering="crispEdges" aria-hidden="true">
      <pattern id={id} width="8" height="8" patternUnits="userSpaceOnUse">
        <rect x="0" y={y} width="1" height="1" fill="#000" />
      </pattern>
      <rect width="100%" height="100%" fill={`url(#${id})`} />
    </svg>
  )
}

function HmiScreen() {
  return (
    <div className="flex min-w-0 flex-1 flex-col overflow-hidden bg-[#b5b5b5]">
      <div className="relative flex h-[60px] shrink-0 items-start gap-[14px] pl-[11px] pt-[5px]">
        <DotGrid id="dotsTop" y={0} />
        <div className="relative w-[84px] shrink-0 whitespace-nowrap pt-1">
          <div className="font-['Open_Sans'] text-[19px] font-extrabold leading-4 text-[#009999]">SIEMENS</div>
          <div className="pt-[6px] text-sm leading-5 text-black">SIMATIC HMI</div>
        </div>
        <div className="relative h-11 flex-1 pt-[6px]">
          <select aria-label="画面" className="h-full w-full appearance-none border border-[#9a9aae] bg-white pl-[3px] text-2xl leading-none text-[#31344a]">
            <option>根画面</option>
          </select>
          <svg viewBox="0 0 18 12" className="pointer-events-none absolute right-[9px] top-[19px] h-3 w-[18px]" fill="none" stroke="#55586a" strokeWidth="1.500">
            <path d="M1 1h16l-8 9z" />
          </svg>
        </div>
        <div className="relative w-[79px] shrink-0 whitespace-nowrap pl-[11px] font-['Liberation_Mono'] text-[13px] leading-5 text-[#222]">
          <div>2000/12/3</div>
          <div className="pl-4 pt-[10px]">10:59:3</div>
        </div>
      </div>
      <div className="h-[3px] shrink-0 bg-[repeating-linear-gradient(135deg,#fff_0_2px,#b5b5b5_2px_3px)]" />
      <div className="relative flex-1">
        <DotGrid id="dotsBody" y={5} />
        <div className="absolute inset-y-0 left-0 w-[3px] bg-[repeating-linear-gradient(135deg,#fff_0_2px,#b5b5b5_2px_3px)]" />
        <button
          type="button"
          className="absolute left-[36px] top-[33px] flex h-[47px] w-[159px] items-center gap-[6px] rounded-sm border border-[#9a9aa8] bg-linear-to-b from-[#f2f2f2] via-[#e0e0e0] to-[#dadada] pl-[6px] text-xs text-[#31344a]"
        >
          <svg viewBox="0 0 36 30" className="h-[30px] w-9" fill="none" stroke="#555">
            <path d="M1 1h34v27H1z" stroke="#564f50" strokeWidth="2" />
            <path d="M0 28.500h36" stroke="#564f50" strokeWidth="3" />
            <path d="M15.500 7.500h6v5h-6zM11.500 17.500h6v5h-6zM20.500 17.500h6v5h-6zM18.500 13v3M14.500 17v-2h9v2" />
          </svg>
          系统画面
        </button>
        {fields.map((f) => (
          <Fragment key={f.id}>
            <label htmlFor={f.id} className={clsx('absolute whitespace-nowrap text-lg font-medium leading-6 text-[#31344a]', f.labelAt)}>
              {f.label}
            </label>
            <input
              id={f.id}
              defaultValue={f.value}
              className={clsx(
                "absolute h-8 w-[162px] rounded-sm border-4 border-[#636573] bg-white pl-[3px] font-['DejaVu_Sans'] text-base leading-none text-[#31344a] shadow-[inset_0_0_0_1px_#45485a]",
                f.at
              )}
            />
          </Fragment>
        ))}
        {actions.map((a) => (
          <button
            key={a.label}
            type="button"
            className={clsx('absolute h-8 w-24 rounded-sm border-2 border-[#464857] bg-linear-to-b from-[#7b7c89] to-[#5b5d6b] text-lg font-medium leading-none text-white', a.at)}
          >
            {a.label}
          </button>
        ))}
        <div className="pointer-events-none absolute left-[167px] top-[320px] origin-top-left -rotate-[29.500deg] whitespace-pre text-white/45">
          <div className="text-[40px] font-medium leading-10">西门子工业{'  '}技术论坛</div>
          <div className="pl-1 font-['Liberation_Sans'] text-[26px] leading-7">support.industry.siemens.com/cs</div>
        </div>
      </div>
    </div>
  )
}

function Editor() {
  return (
    <main className="flex min-w-0 flex-1 flex-col border-l-[3px] border-r border-[#1a2030]">
      <Crumbs />
      <div className="h-[28px] shrink-0 border-t-[3px] border-b border-t-[#f0f0f0] border-b-[#777] bg-[#ccc]" />
      <FormatBar />
      <div className="flex min-h-0 flex-1">
        <div className="flex min-w-0 flex-1 border-l-[3px] border-[#d0d0d0] bg-[#797979]">
          <div className="w-[65px] shrink-0" />
          <div className="w-[19px] shrink-0 bg-[#71879a]" />
          <div className="flex min-w-0 flex-1 bg-black pl-[60px] pt-[70px]">
            <HmiScreen />
          </div>
        </div>
        <div className="flex w-[21px] shrink-0 flex-col bg-[#c2c2c2]">
          <ScrollButton dir="up" />
          <div className="mt-[66px] flex h-[535px] items-center justify-center border border-[#888] bg-linear-to-r from-[#e8e8e8] to-[#d0d0d0] shadow-[inset_0_0_0_1px_#fff]">
            <div className="h-[7px] w-2 bg-[repeating-linear-gradient(#555_0_1px,#ddd_1px_2px)]" />
          </div>
          <ScrollButton dir="down" className="mt-auto" />
        </div>
      </div>
      <div className="flex h-[22px] shrink-0 items-start bg-[#eaeaea]">
        <div className="flex h-full flex-1 bg-[#c2c2c2]">
          <ScrollButton dir="left" />
          <div className="flex flex-[920] items-center justify-center border border-[#888] bg-linear-to-b from-[#e8e8e8] to-[#d4d4d4] shadow-[inset_0_0_0_1px_#fff]">
            <div className="h-2 w-[7px] bg-[repeating-linear-gradient(90deg,#555_0_1px,#ddd_1px_2px)]" />
          </div>
          <div className="flex-[108]" />
          <ScrollButton dir="right" />
        </div>
        <div className="relative ml-2 h-[18px] w-[207px]">
          <select aria-label="缩放" className="block h-full w-full appearance-none border border-[#777] bg-white pb-[3px] pl-[3px] font-['DejaVu_Sans'] text-[11px] leading-none">
            <option>100%</option>
          </select>
          <span className="pointer-events-none absolute inset-y-0 right-0 flex w-[17px] items-center justify-center border border-[#777] bg-[#ddd]">
            <svg viewBox="0 0 8 5" className="h-[5px] w-2">
              <path d="M0 0h8L4 5z" />
            </svg>
          </span>
        </div>
        <div className="ml-5 flex w-24 flex-col pt-1">
          <input
            type="range"
            aria-label="缩放比例"
            defaultValue={33}
            className="h-[11px] w-full appearance-none bg-[linear-gradient(#555,#555)] bg-[length:100%_1px] bg-center bg-no-repeat [&::-webkit-slider-thumb]:h-[11px] [&::-webkit-slider-thumb]:w-2 [&::-webkit-slider-thumb]:appearance-none [&::-webkit-slider-thumb]:rounded-b-sm [&::-webkit-slider-thumb]:border [&::-webkit-slider-thumb]:border-[#777] [&::-webkit-slider-thumb]:bg-[#ccc]"
          />
          <svg viewBox="0 0 97 3" className="h-[3px] w-full" stroke="#111">
            <path d="M0 1.500h97" strokeWidth="3" strokeDasharray="1 5.400" />
          </svg>
        </div>
        <div className="ml-4 flex h-full w-[21px] justify-center bg-white pt-px">
          <Icon name="popOut" className="size-[14px]" />
        </div>
      </div>
      <div className="flex h-[29px] shrink-0 items-end justify-end gap-[2px] border-t-[3px] border-b border-t-[#1a2030] border-b-[#f0f0f0] bg-[#b0b0b0]">
        <button type="button" className="flex h-[22px] w-[75px] items-center gap-1 border border-b-0 border-[#777] bg-[#efefef] pl-[2px] text-base font-bold leading-none">
          <Icon name="properties" />
          属性
        </button>
        <button type="button" className="flex h-[22px] w-20 items-center gap-1 border border-b-0 border-[#777] bg-[#ddd] pl-px text-base leading-none text-[#666]">
          <Icon name="info" />
          信息
          <svg viewBox="0 0 14 14" className="ml-[6px] size-[14px] shrink-0">
            <circle cx="7" cy="7" r="6.500" fill="#f4d91c" stroke="#a08a10" />
            <path d="M7 3v2M7 6v5" stroke="#222" strokeWidth="2" />
          </svg>
        </button>
        <button type="button" className="flex h-[22px] w-[75px] items-center gap-1 border border-b-0 border-[#777] bg-[#ddd] pl-px text-base leading-none text-[#666]">
          <Icon name="diagnose" />
          诊断
        </button>
        <svg viewBox="0 0 70 22" className="h-[22px] w-[70px]" fill="none">
          <path d="M21 3h8v8h-8z" fill="#fff" />
          <path d="M18 6h8v8h-8z" fill="#fff" stroke="#aaa" />
          <path d="M36 3h11M36 6h11M36 9h11M36 12h11" stroke="#eee" strokeWidth="2" />
          <path d="M54 11h12l-6-6z" fill="#fff" />
        </svg>
      </div>
    </main>
  )
}

const railTabs = [
  { icon: 'toolbox', label: '工具箱', size: 'h-[89px]', active: true },
  { icon: 'animation', label: '动画', size: 'h-[73px]' },
  { icon: 'layout', label: '布局', size: 'h-[73px]' },
  { icon: 'instructions', label: '指令', size: 'h-[73px]' },
  { icon: 'tasks', label: '任务', size: 'h-[73px]' },
  { icon: 'library', label: '库', size: 'h-[57px]' },
]

function RightRail() {
  return (
    <aside className="flex w-6 shrink-0 flex-col bg-[#b0b0b0]">
      <div className="flex h-[30px] items-start justify-center pt-[6px]">
        <svg viewBox="0 0 6 12" className="h-3 w-[6px]" fill="#fff">
          <path d="M6 0v12L0 6z" />
        </svg>
      </div>
      <div className="flex w-[21px] flex-col gap-[3px]">
        {railTabs.map((t) => (
          <button
            key={t.label}
            type="button"
            className={clsx(
              'flex flex-col items-center gap-1 border border-[#777] pt-[2px] text-base leading-none [text-orientation:sideways]',
              t.size,
              t.active ? 'bg-[#f0f0f0] font-medium text-black' : 'bg-linear-to-r from-[#d6d6d6] to-[#e6e6e6] text-[#555]'
            )}
          >
            <Icon name={t.icon} />
            <span className="[writing-mode:vertical-rl]">{t.label}</span>
          </button>
        ))}
      </div>
    </aside>
  )
}

const openEditors = [
  { icon: 'overview', label: '总览' },
  { icon: 'screen', label: '根画面', active: true },
  { icon: 'tagTable', label: 'Report_HMI' },
  { icon: 'recipe', label: '配方' },
]

function SogouMark({ className }: { className: string }) {
  return (
    <svg viewBox="0 0 30 30" className={className} aria-hidden="true">
      <path d="M5 3l20-3q3 0 4 3l1 19q0 4-4 5L9 30q-4 0-4-3L0 8q0-4 5-5z" fill="#f4511e" />
      <path d="M22 8c-5-3-13-1-12 3 1 5 12 2 12 7 0 4-8 6-14 3" fill="none" stroke="#fff" strokeWidth="4" />
    </svg>
  )
}

function ImeBar() {
  return (
    <div className="absolute right-[48px] bottom-[10px] flex h-7 w-48 items-center gap-[7px] rounded-sm border border-[#cbd5df] bg-[#fbfbfb] pl-1">
      <SogouMark className="size-[30px] shrink-0" />
      <div className="h-full w-1 shrink-0 border-x border-[#f7c4b4]" />
      <svg viewBox="0 0 136 20" className="h-5 w-[136px] shrink-0" fill="none" stroke="#0d62c0" strokeWidth="2">
        <path d="M1 5.500h12v6H1zM7 1v17" />
        <circle cx="28" cy="6" r="1" />
        <path d="M34 9v3l-2 3" strokeWidth="2.500" />
        <circle cx="55" cy="9.500" r="7.500" strokeWidth="1.600" />
        <path d="M52 6.500v2M58 6.500v2M51.500 11c1 3.500 6 3.500 7 0" strokeWidth="1.500" />
        <path d="M73 11l8-8 4 4-8 8-5 1zM76 8l4 4" strokeWidth="1.800" />
        <path d="M102 4v5" strokeWidth="5" strokeLinecap="round" />
        <path d="M97 8c0 8 10 8 10 0M102 14v4M99 17.500h6" strokeWidth="1.500" />
        <path d="M119 4h4v4h-4zM119 12h4v4h-4zM127 12h4v4h-4z" fill="#0d62c0" />
        <path d="M127 4h4v4h-4z" strokeWidth="1.500" />
      </svg>
    </div>
  )
}

function StatusBar() {
  return (
    <footer className="relative flex h-[30px] shrink-0 items-center bg-[#1c1c1c] pb-[2px] text-white">
      <button type="button" className="flex w-[181px] shrink-0 items-center gap-[10px] pl-9 text-sm font-semibold">
        <svg viewBox="0 0 7 12" className="h-3 w-[7px]" fill="#fff">
          <path d="M7 0v12L0 6z" />
        </svg>
        <span>
          <Mixed text="Portal 视图" han="text-[15px] font-bold" />
        </span>
      </button>
      <div className="flex gap-[3px]">
        {openEditors.map((e) => (
          <button
            key={e.label}
            type="button"
            className={clsx('flex h-5 w-[113px] items-center gap-1 pl-[3px] text-xs text-black', e.active ? 'bg-white font-bold' : 'bg-[#c2c2c2]')}
          >
            <Icon name={e.icon} />
            <Mixed text={e.label} han="text-[13px]" />
          </button>
        ))}
      </div>
      <div className="ml-auto flex h-full w-[338px] items-center">
        <span className="flex size-5 items-center justify-center bg-[#c2c2c2]">
          <Icon name="status" />
        </span>
        <span className="mx-[5px] h-full w-px bg-[#555]" />
        <svg viewBox="0 0 16 16" className="size-4" fill="none">
          <circle cx="8" cy="8" r="8" fill="#0a14f0" />
          <path d="M4 8l3 4 6-7" stroke="#fff" strokeWidth="2" />
        </svg>
        <span className="pl-1 font-['DejaVu_Sans_Mono','Noto_Sans_CJK_SC',monospace] text-[11px]">
          <Mixed text="项目 Rep" han="text-[13px]" />
        </span>
      </div>
      <ImeBar />
    </footer>
  )
}

function StartOrb() {
  return (
    <svg viewBox="0 0 42 42" className="size-[42px]">
      <circle cx="21" cy="21" r="20" fill="url(#orb)" stroke="#9fc6e2" strokeWidth="1.500" />
      <path d="M12 12c3-3 6-3 9-1l-2 9c-3-2-6-2-9 0z" fill="#f0602a" />
      <path d="M22 11c3 2 7 2 11-1l-3 10c-3 2-6 2-10 0z" fill="#8cc63f" />
      <path d="M9 22c3-2 6-2 9 0l-2 9c-3-2-6-2-9 0z" fill="#3aa0ea" />
      <path d="M20 22c3 2 6 2 9 0l-2 9c-3 2-6 2-9 0z" fill="#fcc929" />
      <path d="M4 15a18 18 0 0 1 34 0c-10 5-24 5-34 0z" fill="#fff" opacity=".25" />
    </svg>
  )
}

function Taskbar() {
  return (
    <footer className="relative flex h-[47px] shrink-0 items-center overflow-hidden border-t border-[#a9bccd] bg-[linear-gradient(90deg,#1d5f99_0px,#3c8fc6_180px,#3b9fd8_300px,#6cb7e2_430px,#3fa0d6_560px,#2b8bcb_850px,#2579c4_1150px,#1d64b3_1450px,#1f61a8_1545px,#184a80_1565px,#143a66_1800px)]">
      <svg viewBox="0 0 1920 47" preserveAspectRatio="none" className="absolute inset-0 size-full" aria-hidden="true">
        <g filter="url(#soften)">
          <path d="M560 10Q780 36 1020 8L1040 12Q800 50 560 20z" fill="#fff" opacity=".1" />
          <path d="M700 50L825 5h12L730 50z" fill="#fff" opacity=".14" />
          <path d="M605 5h12l25 45h-10z" fill="#fff" opacity=".12" />
          <path d="M1304 4h14Q1350 22 1380 50h-22Q1340 24 1304 4z" fill="#c4e2ff" opacity=".85" />
          <path d="M160 47L210 5h20l-40 42z" fill="#9fe07a" opacity=".2" />
        </g>
        <path d="M0 0h1920v11H0z" fill="url(#glass)" />
      </svg>
      <div className="relative flex h-full items-center pl-3">
        <button type="button" aria-label="Start" className="w-[60px]">
          <StartOrb />
        </button>
        <button type="button" aria-label="Internet Explorer" className="flex w-[66px] justify-center">
          <svg viewBox="0 0 40 38" className="h-[38px] w-10" fill="none">
            <path d="M38 23H15c0 8 11 10 15 3h7c-5 15-31 15-31-4 0-22 32-22 32 1zM15 17h15c-1-8-14-8-15 0z" fill="#6fd3fa" stroke="#1d7fc0" strokeWidth=".7" />
            <path d="M7 35C-4 37 4 16 19 7c10-7 18-7 17 0" stroke="#f8c51c" strokeWidth="3" />
          </svg>
        </button>
        <button type="button" aria-label="Explorer" className="flex w-[72px] justify-center">
          <svg viewBox="0 0 40 38" className="h-[38px] w-10">
            <path d="M3 4l4-3h8l2 3h17l4 3v24H1V8z" fill="#e8c868" />
            <path d="M6 3h8v5H6zM17 5h9v4h-9zM27 7h8v4h-8z" fill="#fff" />
            <path d="M1 10h38v25H1z" fill="#f5e19a" stroke="#c9a548" />
            <path d="M5 24h30v12h-6v-5H11v5H5z" fill="#a7daf2" stroke="#5aa6cf" />
          </svg>
        </button>
        <button type="button" aria-label="Media Player" className="flex w-[66px] justify-center">
          <svg viewBox="0 0 34 34" className="size-[34px]">
            <path d="M10 1l22 2v28l-20 2z" fill="#9fd4ee" />
            <path d="M1 2h26v28L1 32z" fill="#7ec3e8" stroke="#c9e8f8" />
            <circle cx="14" cy="17" r="11" fill="#f47b20" />
            <path d="M10 10l12 7-12 7z" fill="#fff" />
          </svg>
        </button>
        <div className="flex h-full gap-1 pl-1.5">
          <button type="button" aria-label="Word" className="flex w-[66px] items-center justify-center rounded-sm border border-[#d5ebf8] bg-white/30">
            <svg viewBox="0 0 40 38" className="h-[38px] w-10" fill="none">
              <path d="M7 1h31v34H2V8z" fill="#8fb4e4" stroke="#4a78b8" />
              <path d="M4 22l36 2-6 14H4z" fill="#fff" />
              <path d="M24 28l13 3M24 32l10 3" stroke="#9ab0cc" />
              <path d="M6 8l4 16 6-14 4 14 7-17" stroke="#1a55b4" strokeWidth="4.500" />
            </svg>
          </button>
          <button type="button" className="flex w-[66px] items-center justify-center rounded-sm border border-white bg-white/55">
            <span className="flex size-10 flex-col items-center justify-center bg-[#2b2d3c] text-xl leading-[19px] text-white">
              <span>TIA</span>
              <span className="font-semibold text-[#9aa6dc]">V14</span>
            </span>
          </button>
        </div>
      </div>
      <div className="relative ml-auto flex h-full items-center text-white">
        <span className="font-['Liberation_Mono'] text-sm">CH</span>
        <SogouMark className="ml-2 size-5" />
        <svg viewBox="0 0 64 20" className="ml-2 h-5 w-16" fill="none">
          <circle cx="9" cy="10" r="8.500" fill="#1c3cc8" stroke="#c8d4f0" />
          <path d="M6.500 7.500c0-4 6-3 6 0 0 2-3 2-3 4.500M9.500 13.500v2" stroke="#fff" strokeWidth="1.800" />
          <path d="M30.500 1.500h5v4h-5zM28.500 4.500h5v4h-5z" stroke="#fff" fill="#1a4880" />
          <path d="M30 16h6l-3 3zM51 13h12l-6-6z" fill="#fff" />
        </svg>
        <svg viewBox="0 0 80 22" className="ml-4 h-[22px] w-20" fill="none">
          <path d="M5 5h15v11H5z" fill="#27405e" stroke="#fff" strokeWidth="1.500" />
          <path d="M1 3h5v6H1zM3 9v10h8" stroke="#fff" strokeWidth="1.500" fill="#777" />
          <path d="M9 20l5-9 5 9z" fill="#f8cf1c" stroke="#7a6000" strokeWidth=".6" />
          <path d="M14 14v3M14 18v1" stroke="#222" strokeWidth="1.500" />
          <path d="M32 8h3l6-6v18l-6-6h-3z" fill="#fff" />
          <path d="M44 7c3 2 3 6 0 8" stroke="#9ab4d0" strokeWidth="1.500" />
          <path d="M61.500 2v19" stroke="#fff" strokeWidth="1.500" />
          <path d="M63 3c4-2 5 3 10 1h5v9h-5c-4 2-6-2-10 0z" fill="#fff" />
          <circle cx="74" cy="16" r="5.500" fill="#d8231c" />
          <path d="M71.500 13.500l5 5M76.500 13.500l-5 5" stroke="#fff" strokeWidth="1.600" />
        </svg>
        <div className="w-[106px] pl-1 text-center text-base leading-[22px]">
          <div>3:35 AM</div>
          <div>7/2/2018</div>
        </div>
        <button type="button" aria-label="Show desktop" className="h-full w-[14px] rounded-xs border border-[#8fa9c4] bg-linear-to-b from-white/40 to-white/5" />
      </div>
    </footer>
  )
}

function Gradients() {
  return (
    <svg className="absolute size-0" aria-hidden="true">
      <defs>
        <linearGradient id="page" x1="0" y1="0" x2="1" y2="1">
          <stop offset="0" stopColor="#fff" />
          <stop offset="1" stopColor="#c3cdf5" />
        </linearGradient>
        <linearGradient id="screen" x1="0" y1="0" x2="1" y2="1">
          <stop offset="0" stopColor="#a3b2dd" />
          <stop offset="1" stopColor="#fff" />
        </linearGradient>
        <linearGradient id="blue" x1="0" y1="0" x2="1" y2="1">
          <stop offset="0" stopColor="#5a78ff" />
          <stop offset="1" stopColor="#1410c0" />
        </linearGradient>
        <linearGradient id="folder" x1="0" y1="0" x2="0" y2="1">
          <stop offset="0" stopColor="#ffd877" />
          <stop offset="1" stopColor="#fff3c4" />
        </linearGradient>
        <radialGradient id="orb" cx=".5" cy="1" r=".9">
          <stop offset="0" stopColor="#22d0ff" />
          <stop offset=".6" stopColor="#1b5c92" />
          <stop offset="1" stopColor="#4f86ad" />
        </radialGradient>
        <linearGradient id="glass" x1="0" y1="0" x2="0" y2="1">
          <stop offset="0" stopColor="#7d8fa6" />
          <stop offset=".6" stopColor="#7d93ad" stopOpacity=".8" />
          <stop offset="1" stopColor="#7d8fa6" stopOpacity="0" />
        </linearGradient>
        <filter id="soften">
          <feGaussianBlur stdDeviation="2.500" />
        </filter>
      </defs>
    </svg>
  )
}

export default function App() {
  return (
    <div className="flex h-screen flex-col overflow-hidden bg-[#b0b0b0] font-['Noto_Sans','Noto_Sans_CJK_SC',sans-serif] text-black">
      <Gradients />
      <TitleBar />
      <MenuArea />
      <div className="flex min-h-0 flex-1">
        <aside className="flex w-6 shrink-0 flex-col border-r border-[#1a2030] bg-[#b0b0b0]">
          <div className="h-[25px] border-b border-white" />
          <button type="button" className="flex h-[221px] items-center justify-center border-b border-white pr-1 text-base font-bold leading-none text-white">
            <span className="rotate-180 [text-orientation:sideways] [writing-mode:vertical-rl]">可视化</span>
          </button>
        </aside>
        <ProjectPanel />
        <Editor />
        <RightRail />
      </div>
      <StatusBar />
      <Taskbar />
    </div>
  )
}
